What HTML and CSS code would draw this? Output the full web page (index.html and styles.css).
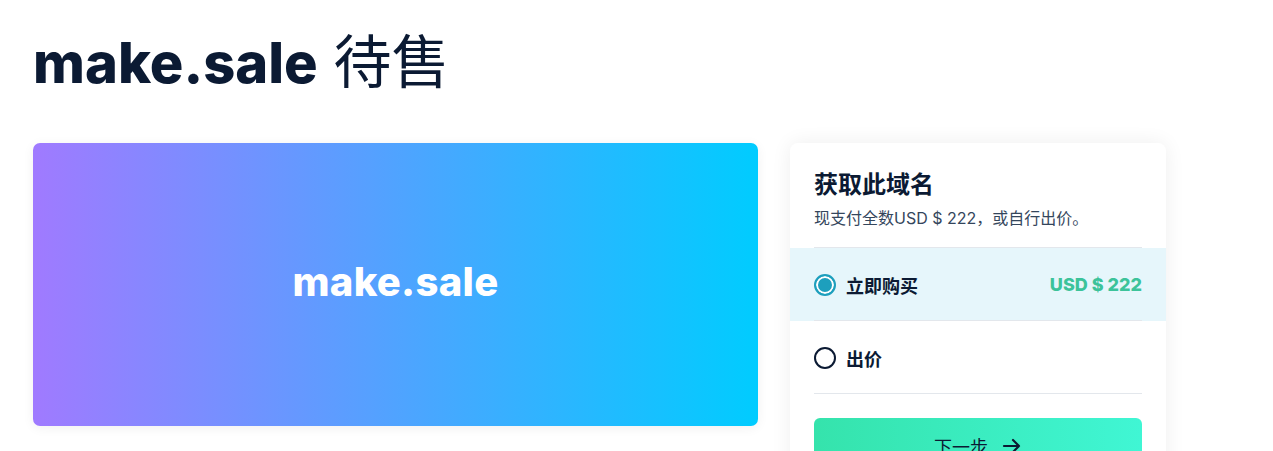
FILE: index.html
```html
<!DOCTYPE html>
<html lang="zh-CN">
<head>
    <meta charset="UTF-8">
    <meta name="viewport" content="width=device-width, initial-scale=1.0">
    <title>make.sale 待售</title>
    <link rel="stylesheet" href="styles.css">
</head>
<body>
    <div class="page">
        <h1 class="page-title"><span class="domain">make.sale</span> <span class="for-sale">待售</span></h1>

        <div class="sale-layout">
            <div class="domain-banner">
                <span>make.sale</span>
            </div>

            <div class="buy-card">
                <div class="buy-head">
                    <h2>获取此域名</h2>
                    <p>现支付全数USD $ 222，或自行出价。</p>
                </div>

                <label class="option option-active">
                    <span class="radio radio-checked"></span>
                    <span class="option-label">立即购买</span>
                    <span class="option-price">USD $ 222</span>
                </label>

                <label class="option">
                    <span class="radio"></span>
                    <span class="option-label">出价</span>
                </label>

                <div class="buy-actions">
                    <button type="button" class="next-btn">
                        下一步
                        <svg width="20" height="20" viewBox="0 0 20 20" fill="none" stroke="#0b1a33" stroke-width="2.2" stroke-linecap="round" stroke-linejoin="round">
                            <path d="M2 10h15M11 4l6 6-6 6"/>
                        </svg>
                    </button>
                </div>
            </div>
        </div>
    </div>
</body>
</html>
```

FILE: styles.css
```css
body {
    margin: 0;
    background: #fff;
    font-family: Inter, "Noto Sans CJK SC", sans-serif;
    color: #0b1a33;
}
.page {
    padding: 22px 33px 0;
}
.page-title {
    margin: 0;
    font-size: 56px;
    font-weight: 400;
    line-height: 80px;
}
.domain {
    font-weight: 800;
}
.for-sale {
    font-size: 58px;
}
.sale-layout {
    display: flex;
    align-items: flex-start;
    gap: 32px;
    margin-top: 40px;
}
.domain-banner {
    width: 725px;
    height: 283px;
    box-sizing: border-box;
    padding-bottom: 6px;
    border-radius: 7px;
    background: linear-gradient(90deg, #a07aff 0%, #00ccff 100%);
    box-shadow: 0 2px 12px rgba(0, 0, 0, 0.06);
    display: flex;
    align-items: center;
    justify-content: center;
    color: #fff;
    font-size: 40px;
    font-weight: 800;
    letter-spacing: 0.3px;
}
.buy-card {
    width: 376px;
    background: white;
    border-radius: 8px;
    box-shadow: 0 0 20px rgba(0, 0, 0, 0.07);
    padding-bottom: 40px;
}
.buy-head {
    margin: 0 24px;
    padding: 26px 0 18px;
    border-bottom: 1px solid #e3e7ec;
}
.buy-head h2 {
    margin: 0;
    font-size: 24px;
    line-height: 32px;
    font-weight: 700;
}
.buy-head p {
    margin: 6px 0 0;
    font-size: 16px;
    line-height: 22px;
    color: #34465c;
}
.option {
    display: flex;
    align-items: center;
    height: 73px;
    padding: 0 24px;
    position: relative;
    cursor: pointer;
}
.option::after {
    content: "";
    position: absolute;
    left: 24px;
    right: 24px;
    bottom: 0;
    border-bottom: 1px solid #e3e7ec;
}
.option-active {
    background: #e6f6fb;
}
.radio {
    width: 18px;
    height: 18px;
    border: 2px solid #0b1a33;
    border-radius: 50%;
    margin-right: 10px;
    box-sizing: content-box;
}
.radio-checked {
    border-color: #1d9fbd;
    background: #1d9fbd;
    box-shadow: inset 0 0 0 2px #fff;
}
.option-label {
    font-size: 18px;
    font-weight: 700;
    flex: 1;
}
.option-price {
    font-size: 18px;
    font-weight: 800;
    color: #3cc39a;
}
.buy-actions {
    padding: 24px 24px 0;
}
.next-btn {
    width: 100%;
    height: 56px;
    border: none;
    border-radius: 6px;
    background: linear-gradient(90deg, #35e3ac 0%, #40f6d4 100%);
    color: #0b1a33;
    font-family: inherit;
    font-size: 18px;
    display: flex;
    align-items: center;
    justify-content: center;
    gap: 14px;
    cursor: pointer;
}
```
